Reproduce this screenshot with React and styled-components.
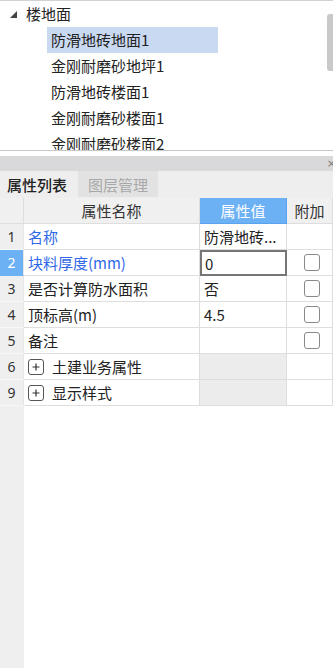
import React from "react";
import styled, { createGlobalStyle } from "styled-components";

const Global = createGlobalStyle`
  html, body { margin: 0; padding: 0; background: #fff; }
  body { font-family: "Noto Sans CJK SC", "Noto Sans", sans-serif; color: #222; }
  #root { height: 668px; }
  * { box-sizing: border-box; }
`;

const Page = styled.div`
  height: 668px;
  display: flex;
  flex-direction: column;
  overflow: hidden;
  font-size: 15px;
`;

const TreePanel = styled.div`
  position: relative;
  height: 151px;
  border-top: 1px solid #d2d2d2;
  border-bottom: 1px solid #c8c8c8;
  overflow: hidden;
  flex: none;
`;

const TreeRow = styled.div`
  height: 26px;
  display: flex;
  align-items: center;
  padding-left: ${(p) => p.$indent}px;
  line-height: 26px;
  white-space: nowrap;
`;

const Caret = styled.svg`
  width: 7px;
  height: 7px;
  margin-right: 9px;
  margin-top: 1px;
`;

const TreeLabel = styled.span`
  display: inline-block;
  height: 26px;
  line-height: 26px;
  padding: 0 4px;
  width: ${(p) => (p.$selected ? "171px" : "auto")};
  background: ${(p) => (p.$selected ? "#c9d9f1" : "transparent")};
`;

const Thumb = styled.div`
  position: absolute;
  right: 0;
  top: 13px;
  width: 6px;
  height: 57px;
  background: #c9c9c9;
  border-radius: 3px 0 0 3px;
`;

const Spacer = styled.div`
  height: 5px;
  flex: none;
`;

const TitleBar = styled.div`
  height: 15px;
  background: #d9d9dc;
  flex: none;
  display: flex;
  justify-content: flex-end;
  align-items: center;
  overflow: hidden;
`;

const Close = styled.span`
  font-family: "DejaVu Sans", sans-serif;
  font-size: 11px;
  color: #7a7a7a;
  margin-right: -3px;
  line-height: 15px;
`;

const TabBar = styled.div`
  height: 27px;
  background: #eeeeee;
  display: flex;
  align-items: stretch;
  flex: none;
`;

const Tab = styled.div`
  display: flex;
  align-items: center;
  justify-content: ${(p) => (p.$active ? "flex-start" : "center")};
  padding-left: ${(p) => (p.$active ? "7px" : "0")};
  width: ${(p) => (p.$active ? "78px" : "80px")};
  margin-bottom: 1px;
  background: ${(p) => (p.$active ? "#eeeeee" : "#e2e2e2")};
  color: ${(p) => (p.$active ? "#222" : "#a8a8a8")};
  font-weight: ${(p) => (p.$active ? 500 : 400)};
`;

const Grid = styled.div`
  display: grid;
  grid-template-columns: 24px 176px 87px 1fr;
  flex: none;
`;

const HeadCell = styled.div`
  height: 26px;
  display: flex;
  align-items: center;
  justify-content: center;
  background: ${(p) => (p.$active ? "#6db1f5" : "#f0f0f0")};
  color: ${(p) => (p.$active ? "#fff" : "#333")};
  border-right: 1px solid ${(p) => (p.$active ? "#5aa3ee" : "#dedede")};
  border-bottom: 1px solid ${(p) => (p.$active ? "#5aa3ee" : "#dedede")};
`;

const NumCell = styled.div`
  height: 26px;
  display: flex;
  align-items: center;
  justify-content: center;
  background: ${(p) => (p.$active ? "#6db1f5" : "#efefef")};
  color: ${(p) => (p.$active ? "#fff" : "#333")};
  border-bottom: 1px solid ${(p) => (p.$active ? "#6db1f5" : "#f7f7f7")};
  border-right: 1px solid #e6e6e6;
  font-family: "Noto Sans", sans-serif;
  font-size: 14px;
`;

const Cell = styled.div`
  height: 26px;
  display: flex;
  align-items: center;
  padding-left: 4px;
  padding-right: 2px;
  border-right: 1px solid #dedede;
  border-bottom: 1px solid #dedede;
  background: ${(p) => (p.$shaded ? "#ececec" : "#fff")};
  color: ${(p) => (p.$blue ? "#2f68e8" : "#222")};
  justify-content: ${(p) => (p.$center ? "center" : "flex-start")};
  white-space: nowrap;
  overflow: hidden;
`;

const EditCell = styled(Cell)`
  border: 2px solid #767676;
  padding-left: 3px;
`;

const Check = styled.span`
  width: 16px;
  height: 17px;
  border: 1px solid #8a8a8a;
  border-radius: 3px;
  background: #fff;
  margin-left: 3px;
`;

const PlusBox = styled.span`
  width: 16px;
  height: 16px;
  border: 1px solid #555;
  border-radius: 3px;
  display: inline-flex;
  align-items: center;
  justify-content: center;
  margin-right: 8px;
  flex: none;
`;

const Filler = styled.div`
  flex: 1;
  display: grid;
  grid-template-columns: 24px 1fr;
`;

const FillerGutter = styled.div`
  background: #efefef;
`;

const treeChildren = [
  "防滑地砖地面1",
  "金刚耐磨砂地坪1",
  "防滑地砖楼面1",
  "金刚耐磨砂楼面1",
  "金刚耐磨砂楼面2",
];

const Plus = () => (
  <PlusBox>
    <svg width="8" height="8" viewBox="0 0 8 8">
      <path d="M4 0.5V7.5M0.5 4H7.5" stroke="#333" strokeWidth="1.2" />
    </svg>
  </PlusBox>
);

const rows = [
  { n: "1", name: "名称", blue: true, value: "防滑地砖..." },
  { n: "2", name: "块料厚度(mm)", blue: true, value: "0", edit: true, check: true, active: true },
  { n: "3", name: "是否计算防水面积", value: "否", check: true },
  { n: "4", name: "顶标高(m)", value: "4.5", check: true },
  { n: "5", name: "备注", value: "", check: true },
  { n: "6", name: "土建业务属性", group: true },
  { n: "9", name: "显示样式", group: true },
];

export default function App() {
  return (
    <>
      <Global />
      <Page>
        <TreePanel>
          <TreeRow $indent={10}>
            <Caret viewBox="0 0 7 7">
              <polygon points="7,0 7,7 0,7" fill="#444" />
            </Caret>
            <span>楼地面</span>
          </TreeRow>
          {treeChildren.map((t, i) => (
            <TreeRow key={t} $indent={47}>
              <TreeLabel $selected={i === 0}>{t}</TreeLabel>
            </TreeRow>
          ))}
          <Thumb />
        </TreePanel>
        <Spacer />
        <TitleBar>
          <Close>×</Close>
        </TitleBar>
        <TabBar>
          <Tab $active>属性列表</Tab>
          <Tab>图层管理</Tab>
        </TabBar>
        <Grid>
          <HeadCell />
          <HeadCell>属性名称</HeadCell>
          <HeadCell $active>属性值</HeadCell>
          <HeadCell>附加</HeadCell>
          {rows.map((r) => (
            <React.Fragment key={r.n}>
              <NumCell $active={r.active}>{r.n}</NumCell>
              <Cell $blue={r.blue}>
                {r.group && <Plus />}
                {r.name}
              </Cell>
              {r.edit ? (
                <EditCell>{r.value}</EditCell>
              ) : (
                <Cell $shaded={r.group}>{r.value}</Cell>
              )}
              <Cell $center>{r.check && <Check />}</Cell>
            </React.Fragment>
          ))}
        </Grid>
        <Filler>
          <FillerGutter />
          <div />
        </Filler>
      </Page>
    </>
  );
}
